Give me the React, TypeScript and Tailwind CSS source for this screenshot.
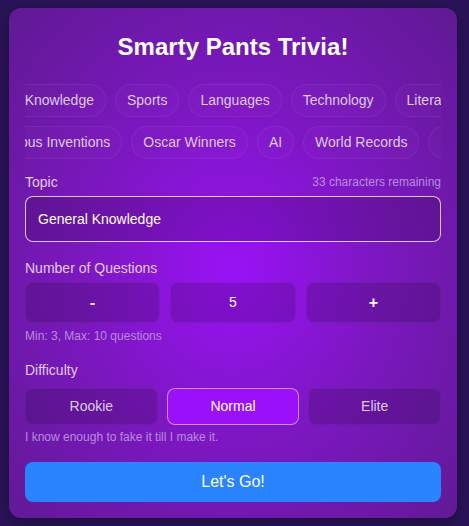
import { useState } from "react";

const rowOne = ["General Knowledge", "Sports", "Languages", "Technology", "Literature", "History"];
const rowTwo = ["Famous Inventions", "Oscar Winners", "AI", "World Records", "Mythology"];

const levels = [
  { name: "Rookie", blurb: "I'm just here for the snacks." },
  { name: "Normal", blurb: "I know enough to fake it till I make it." },
  { name: "Elite", blurb: "Bring it on, I was born for this." },
];

function Chip({ label }: { label: string }) {
  return (
    <div className="h-[33px] shrink-0 flex items-center px-[11px] rounded-full border border-white/[0.06] bg-white/[0.015] text-[14px] text-[#dccaf3] whitespace-nowrap">
      {label}
    </div>
  );
}

export default function App() {
  const [topic] = useState("General Knowledge");
  const [count, setCount] = useState(5);
  const [level, setLevel] = useState(1);

  return (
    <div
      className="min-h-screen w-full bg-[#2a1459] pl-[9px] pr-[12px] pt-[8px] pb-[8px]"
      style={{ fontFamily: '"Liberation Sans", Arial, sans-serif' }}
    >
      <div className="w-[448px] rounded-xl bg-[radial-gradient(ellipse_at_50%_52%,#9a12f6_0%,#7d17c2_45%,#5f1a92_100%)] px-4 pt-[23px] pb-4 shadow-[0_4px_18px_rgba(0,0,0,0.35)]">
        <h1 className="h-8 leading-8 text-center text-2xl font-bold text-white">Smarty Pants Trivia!</h1>

        <div className="mt-[21px] overflow-hidden flex flex-col gap-[9px]">
          <div className="flex gap-[9px] ml-[-66px]">
            {rowOne.map((t) => (
              <Chip key={t} label={t} />
            ))}
          </div>
          <div className="flex gap-[9px] ml-[-45px]">
            {rowTwo.map((t) => (
              <Chip key={t} label={t} />
            ))}
          </div>
        </div>

        <div className="mt-[13px] h-5 flex items-center justify-between">
          <span className="text-[14px] text-[#e0ccf6]">Topic</span>
          <span className="text-[12px] text-[#b88ce0]">{50 - topic.length} characters remaining</span>
        </div>
        <div className="mt-1 h-[46px] rounded-lg border border-white/75 bg-black/15 flex items-center px-[12px] text-[14px] text-white">
          {topic}
        </div>

        <div className="mt-4 h-5 leading-5 text-[14px] text-[#e0ccf6]">Number of Questions</div>
        <div className="mt-1 flex gap-[10px] h-[41px]">
          <button
            onClick={() => setCount(Math.max(3, count - 1))}
            className="flex-1 rounded-lg bg-black/15 border border-white/[0.04] text-white text-[16px] font-bold"
          >
            -
          </button>
          <div className="w-[126px] rounded-lg bg-black/15 border border-white/[0.04] flex items-center justify-center text-white text-[14px]">
            {count}
          </div>
          <button
            onClick={() => setCount(Math.min(10, count + 1))}
            className="flex-1 rounded-lg bg-black/15 border border-white/[0.04] text-white text-[16px] font-bold"
          >
            +
          </button>
        </div>
        <div className="mt-[5px] leading-4 text-[12px] text-[#b88ce0]">Min: 3, Max: 10 questions</div>

        <div className="mt-4 h-5 leading-5 text-[14px] text-[#e0ccf6]">Difficulty</div>
        <div className="mt-2 grid grid-cols-3 gap-[9px] h-[37px]">
          {levels.map((l, i) => (
            <button
              key={l.name}
              onClick={() => setLevel(i)}
              className={
                i === level
                  ? "rounded-lg bg-[#9a10f8] border border-white/50 text-white text-[14px] font-medium"
                  : "rounded-lg bg-black/15 border border-white/[0.04] text-[#dccaf3] text-[14px]"
              }
            >
              {l.name}
            </button>
          ))}
        </div>
        <div className="mt-1 leading-4 text-[12px] text-[#b88ce0]">{levels[level].blurb}</div>

        <button className="mt-[17px] w-full h-10 rounded-lg bg-[#2b84ff] text-white text-[16px]">Let's Go!</button>
      </div>
    </div>
  );
}
